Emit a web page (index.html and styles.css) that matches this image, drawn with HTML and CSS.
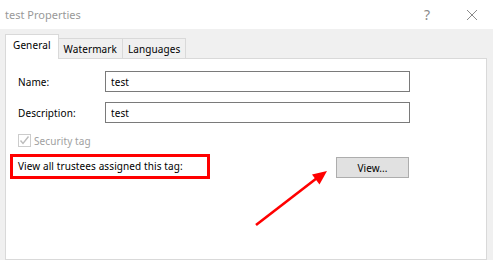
FILE: index.html
```html
<!DOCTYPE html>
<html lang="en">
<head>
    <meta charset="UTF-8">
    <title>test Properties</title>
    <link rel="stylesheet" href="styles.css">
</head>
<body>
    <div class="titlebar">
        <span class="title">test Properties</span>
        <span class="help">?</span>
        <span class="close">
            <svg width="12" height="12" viewBox="0 0 12 12"><path d="M1 1 L11 11 M11 1 L1 11" stroke="#8a8a8a" stroke-width="1" fill="none"/></svg>
        </span>
    </div>

    <div class="tabs">
        <div class="tab active">General</div>
        <div class="tab">Watermark</div>
        <div class="tab">Languages</div>
    </div>

    <div class="panel">
        <div class="form">
            <div class="row">
                <label for="name">Name:</label>
                <input type="text" id="name" value="test">
            </div>
            <div class="row">
                <label for="desc">Description:</label>
                <input type="text" id="desc" value="test">
            </div>
            <div class="check-row">
                <span class="checkbox">
                    <svg width="11" height="11" viewBox="0 0 11 11"><path d="M1.5 5.5 L4 8.5 L9.5 1.5" stroke="#bcbcbc" stroke-width="1.4" fill="none"/></svg>
                </span>
                <span class="check-label">Security tag</span>
            </div>
            <div class="view-row">
                <span class="highlight">View all trustees assigned this tag:</span>
                <button type="button">View...</button>
            </div>
        </div>
    </div>

    <svg class="arrow" width="493" height="260" viewBox="0 0 493 260">
        <line x1="256" y1="225" x2="317" y2="178" stroke="#ff0000" stroke-width="2.6"/>
        <polygon points="327,171 319.5,184.5 312,174.5" fill="#ff0000"/>
    </svg>
</body>
</html>
```

FILE: styles.css
```css
body {
    margin: 0;
    width: 493px;
    height: 260px;
    overflow: hidden;
    background: #f0f0f0;
    font-family: "Noto Sans", "Open Sans", sans-serif;
    font-size: 10px;
    letter-spacing: 0.1px;
    color: #000;
    position: relative;
}
.titlebar {
    height: 29px;
    background: #fff;
    display: flex;
    align-items: center;
    padding-left: 5px;
    color: #999;
    font-size: 11px;
    letter-spacing: 0;
}
.title {
    flex: 1;
    margin-top: -1px;
}
.help {
    width: 12px;
    margin-right: 30px;
    font-size: 14px;
    color: #8a8a8a;
}
.close {
    width: 12px;
    margin-right: 15px;
    display: flex;
}
.tabs {
    display: flex;
    align-items: flex-end;
    margin: 6px 0 0 5px;
    height: 24px;
    position: relative;
    z-index: 1;
}
.tab {
    height: 20px;
    line-height: 21px;
    padding: 0 5px;
    border: 1px solid #d9d9d9;
    border-bottom: none;
    margin-left: -1px;
}
.tab:first-child {
    margin-left: 0;
}
.tab.active {
    height: 24px;
    line-height: 21px;
    background: #fff;
    padding: 0 7px;
    position: relative;
    z-index: 2;
}
.panel {
    margin: -1px 6px 0 5px;
    height: 188px;
    background: #fff;
    border: 1px solid #d9d9d9;
    padding: 12px 0 0 12px;
}
.form {
    width: 392px;
}
.row {
    display: flex;
    align-items: center;
    height: 21px;
    margin-bottom: 10px;
}
.row label {
    width: 87px;
}
.row input {
    flex: 1;
    height: 21px;
    box-sizing: border-box;
    border: 1px solid #7a7a7a;
    padding: 0 5px;
    font: inherit;
    letter-spacing: inherit;
    outline: none;
}
.check-row {
    display: flex;
    align-items: center;
    margin-top: 11px;
    height: 13px;
    color: #a0a0a0;
}
.checkbox {
    width: 11px;
    height: 11px;
    border: 1px solid #cccccc;
    margin-right: 3px;
    display: flex;
}
.view-row {
    display: flex;
    align-items: center;
    margin-top: 7px;
}
.highlight {
    border: 3px solid #ff0000;
    margin-left: -8px;
    width: 184px;
    height: 19px;
    line-height: 19px;
    padding: 0 5px;
    white-space: nowrap;
}
button {
    margin-left: auto;
    margin-right: 1px;
    width: 73px;
    height: 21px;
    margin-top: 2px;
    background: #e1e1e1;
    border: 1px solid #adadad;
    font: inherit;
    letter-spacing: inherit;
    padding: 0;
}
.arrow {
    position: absolute;
    left: 0;
    top: 0;
    pointer-events: none;
}
```
